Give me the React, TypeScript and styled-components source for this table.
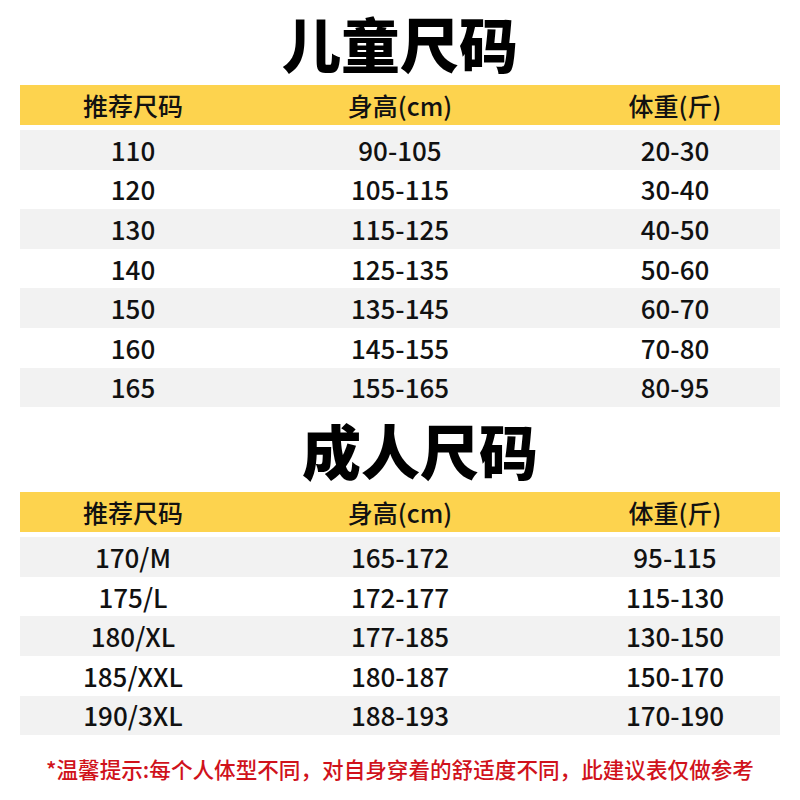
import React, { ReactElement } from 'react';
import styled, { createGlobalStyle } from 'styled-components';

const GlobalStyle = createGlobalStyle`
  html, body {
    margin: 0;
    padding: 0;
    background: #ffffff;
  }
  body {
    font-family: "Noto Sans CJK SC", "Noto Sans", sans-serif;
  }
`;

type Row = [string, string, string];

const HEADERS: Row = ['推荐尺码', '身高(cm)', '体重(斤)'];

const KIDS: Row[] = [
  ['110', '90-105', '20-30'],
  ['120', '105-115', '30-40'],
  ['130', '115-125', '40-50'],
  ['140', '125-135', '50-60'],
  ['150', '135-145', '60-70'],
  ['160', '145-155', '70-80'],
  ['165', '155-165', '80-95'],
];

const ADULTS: Row[] = [
  ['170/M', '165-172', '95-115'],
  ['175/L', '172-177', '115-130'],
  ['180/XL', '177-185', '130-150'],
  ['185/XXL', '180-187', '150-170'],
  ['190/3XL', '188-193', '170-190'],
];

function SizeTable({ title, rows, shift }: { title: string; rows: Row[]; shift?: number }): ReactElement {
  return (
    <Section>
      <TitleBar $shift={shift ?? 0}>
        <Title>{title}</Title>
      </TitleBar>
      <HeaderRow>
        {HEADERS.map((h) => (
          <Cell key={h}>{h}</Cell>
        ))}
      </HeaderRow>
      <Body>
        {rows.map((r, i) => (
          <DataRow key={r[0]} $striped={i % 2 === 0}>
            {r.map((v, j) => (
              <Cell key={j}>{v}</Cell>
            ))}
          </DataRow>
        ))}
      </Body>
    </Section>
  );
}

export default function App(): ReactElement {
  return (
    <>
      <GlobalStyle />
      <Page>
        <SizeTable title="儿童尺码" rows={KIDS} />
        <SizeTable title="成人尺码" rows={ADULTS} shift={20} />
        <Note>*温馨提示:每个人体型不同，对自身穿着的舒适度不同，此建议表仅做参考</Note>
      </Page>
    </>
  );
}

const Page = styled.div`
  width: 800px;
  height: 800px;
  padding: 0 20px;
  box-sizing: border-box;
  background: #ffffff;
  display: flex;
  flex-direction: column;
`;

const Section = styled.div`
  display: flex;
  flex-direction: column;
`;

const TitleBar = styled.div<{ $shift: number }>`
  display: flex;
  justify-content: center;
  padding-left: ${({ $shift }) => $shift * 2}px;
`;

const Title = styled.h1`
  margin: 0;
  font-family: "Noto Sans CJK SC", sans-serif;
  font-size: 59px;
  line-height: 85px;
  height: 85px;
  font-weight: 900;
  color: #000000;
`;

const Grid = styled.div`
  display: grid;
  grid-template-columns: 226px 1fr 210px;
  align-items: center;
  font-weight: 500;
  color: #111111;

  & > div:nth-child(2) {
    padding-right: 16px;
  }
`;

const HeaderRow = styled(Grid)`
  height: 40px;
  font-size: 25px;
  background: #fdd34e;
`;

const Body = styled.div`
  margin-top: 5px;
  display: flex;
  flex-direction: column;
`;

const DataRow = styled(Grid)<{ $striped: boolean }>`
  height: 39.6px;
  font-size: 26px;
  background: ${({ $striped }) => ($striped ? '#f2f2f2' : '#ffffff')};
`;

const Cell = styled.div`
  text-align: center;
  line-height: 1;
  white-space: nowrap;
`;

const Note = styled.div`
  margin-top: 18px;
  text-align: center;
  font-size: 21.6px;
  font-weight: 500;
  color: #d0121b;
  white-space: nowrap;
`;
